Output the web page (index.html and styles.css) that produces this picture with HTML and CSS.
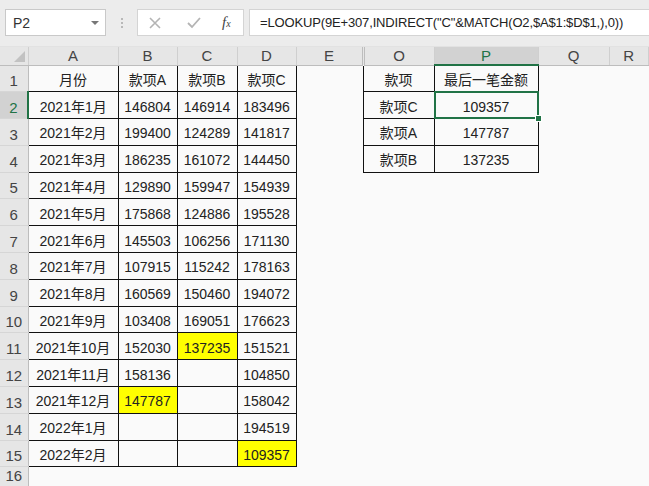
FILE: index.html
```html
<!DOCTYPE html>
<html lang="zh-CN">
<head>
    <meta charset="UTF-8">
    <title>最后一笔金额</title>
    <link rel="stylesheet" href="styles.css">
</head>
<body>

    <div class="toolbar">
        <div class="namebox">
            <span>P2</span>
            <span class="arrow"></span>
        </div>
        <div class="grip"><i></i><i></i><i></i></div>
        <div class="fx-buttons">
            <svg width="14" height="14" viewBox="0 0 14 14"><path d="M2 2 L12 12 M12 2 L2 12" stroke="#b4b4b4" stroke-width="1.6" fill="none"/></svg>
            <svg width="16" height="14" viewBox="0 0 16 14"><path d="M2 7 L6 11 L14 2" stroke="#b4b4b4" stroke-width="1.8" fill="none"/></svg>
            <span class="fx">f<sub>x</sub></span>
        </div>
        <div class="formula">=LOOKUP(9E+307,INDIRECT("C"&amp;MATCH(O2,$A$1:$D$1,),0))</div>
    </div>

    <table class="sheet">
        <colgroup>
            <col style="width:28px"><col style="width:90px"><col style="width:59px"><col style="width:60px">
            <col style="width:59px"><col style="width:67px"><col style="width:71px"><col style="width:104px">
            <col style="width:71px"><col>
        </colgroup>
        <tr class="colhead">
            <th class="corner"><span class="tri"></span></th>
            <th>A</th><th>B</th><th>C</th><th>D</th><th class="hidden-after">E</th>
            <th>O</th><th class="sel">P</th><th>Q</th><th>R</th>
        </tr>
        <tr><td class="rh">1</td><td class="c">月份</td><td class="c">款项A</td><td class="c">款项B</td><td class="c">款项C</td><td></td><td class="c">款项</td><td class="c">最后一笔金额</td><td></td><td></td></tr>
        <tr><td class="rh sel">2</td><td class="c">2021年1月</td><td class="c">146804</td><td class="c">146914</td><td class="c">183496</td><td></td><td class="c">款项C</td><td class="c active">109357</td><td></td><td></td></tr>
        <tr><td class="rh">3</td><td class="c">2021年2月</td><td class="c">199400</td><td class="c">124289</td><td class="c">141817</td><td></td><td class="c">款项A</td><td class="c">147787</td><td></td><td></td></tr>
        <tr><td class="rh">4</td><td class="c">2021年3月</td><td class="c">186235</td><td class="c">161072</td><td class="c">144450</td><td></td><td class="c">款项B</td><td class="c">137235</td><td></td><td></td></tr>
        <tr><td class="rh">5</td><td class="c">2021年4月</td><td class="c">129890</td><td class="c">159947</td><td class="c">154939</td><td></td><td></td><td></td><td></td><td></td></tr>
        <tr><td class="rh">6</td><td class="c">2021年5月</td><td class="c">175868</td><td class="c">124886</td><td class="c">195528</td><td></td><td></td><td></td><td></td><td></td></tr>
        <tr><td class="rh">7</td><td class="c">2021年6月</td><td class="c">145503</td><td class="c">106256</td><td class="c">171130</td><td></td><td></td><td></td><td></td><td></td></tr>
        <tr><td class="rh">8</td><td class="c">2021年7月</td><td class="c">107915</td><td class="c">115242</td><td class="c">178163</td><td></td><td></td><td></td><td></td><td></td></tr>
        <tr><td class="rh">9</td><td class="c">2021年8月</td><td class="c">160569</td><td class="c">150460</td><td class="c">194072</td><td></td><td></td><td></td><td></td><td></td></tr>
        <tr><td class="rh">10</td><td class="c">2021年9月</td><td class="c">103408</td><td class="c">169051</td><td class="c">176623</td><td></td><td></td><td></td><td></td><td></td></tr>
        <tr><td class="rh">11</td><td class="c">2021年10月</td><td class="c">152030</td><td class="c hl">137235</td><td class="c">151521</td><td></td><td></td><td></td><td></td><td></td></tr>
        <tr><td class="rh">12</td><td class="c">2021年11月</td><td class="c">158136</td><td class="c"></td><td class="c">104850</td><td></td><td></td><td></td><td></td><td></td></tr>
        <tr><td class="rh">13</td><td class="c">2021年12月</td><td class="c hl">147787</td><td class="c"></td><td class="c">158042</td><td></td><td></td><td></td><td></td><td></td></tr>
        <tr><td class="rh">14</td><td class="c">2022年1月</td><td class="c"></td><td class="c"></td><td class="c">194519</td><td></td><td></td><td></td><td></td><td></td></tr>
        <tr><td class="rh">15</td><td class="c">2022年2月</td><td class="c"></td><td class="c"></td><td class="c hl">109357</td><td></td><td></td><td></td><td></td><td></td></tr>
        <tr class="last"><td class="rh">16</td><td></td><td></td><td></td><td></td><td></td><td></td><td></td><td></td><td></td></tr>
    </table>

</body>
</html>
```

FILE: styles.css
```css
body {
    margin: 0;
    width: 649px;
    height: 486px;
    overflow: hidden;
    background-color: #fafafa;
    font-family: "Liberation Sans", "Noto Sans CJK SC", sans-serif;
    color: #222;
}
.toolbar {
    height: 47px;
    background-color: #ececec;
    display: flex;
    align-items: flex-start;
    padding-top: 9px;
    box-sizing: border-box;
    border-bottom: 1px solid #e2e2e2;
}
.namebox {
    margin-left: 5px;
    width: 101px;
    height: 27px;
    box-sizing: border-box;
    background-color: #fff;
    border: 1px solid #c9c9c9;
    display: flex;
    align-items: center;
    justify-content: space-between;
    padding: 0 6px 0 7px;
    font-size: 14px;
    color: #333;
}
.arrow {
    width: 0;
    height: 0;
    border-left: 4px solid transparent;
    border-right: 4px solid transparent;
    border-top: 4px solid #777;
}
.grip {
    width: 31px;
    height: 27px;
    display: flex;
    flex-direction: column;
    align-items: center;
    justify-content: center;
    gap: 2px;
}
.grip i {
    width: 2px;
    height: 2px;
    background-color: #b8b8b8;
}
.fx-buttons {
    width: 107px;
    height: 27px;
    box-sizing: border-box;
    background-color: #fff;
    border: 1px solid #d4d4d4;
    display: flex;
    align-items: center;
    padding-left: 10px;
}
.fx-buttons svg:first-child {
    margin-right: 24px;
}
.fx-buttons svg:nth-child(2) {
    margin-right: 20px;
}
.fx {
    font-family: "Liberation Serif", serif;
    font-style: italic;
    font-size: 15px;
    color: #444;
}
.fx sub {
    font-size: 10px;
    vertical-align: 0;
}
.formula {
    margin-left: 5px;
    flex: 1;
    height: 27px;
    box-sizing: border-box;
    background-color: #fff;
    border: 1px solid #d4d4d4;
    border-right: none;
    padding-left: 10px;
    font-size: 13px;
    letter-spacing: -0.15px;
    line-height: 25px;
    color: #222;
    white-space: nowrap;
    overflow: hidden;
}
.sheet {
    border-collapse: collapse;
    table-layout: fixed;
    width: 649px;
}
.colhead th {
    height: 17px;
    padding: 0;
    background-color: #e6e6e6;
    border-right: 1px solid #cfcfcf;
    border-bottom: 1px solid #bdbdbd;
    font-weight: normal;
    font-size: 15px;
    color: #444;
    line-height: 17px;
}
.colhead th.corner {
    position: relative;
}
.tri {
    position: absolute;
    right: 3px;
    bottom: 3px;
    width: 0;
    height: 0;
    border-left: 11px solid transparent;
    border-bottom: 11px solid #c2c2c2;
}
.colhead th.hidden-after {
    border-right: 3px double #bdbdbd;
}
.colhead th.sel {
    background-color: #d2d2d2;
    color: #217346;
    border-bottom: 2px solid #217346;
}
tr {
    height: 26.8px;
}
tr.colhead {
    height: 18px;
}
tr.last {
    height: 19px;
}
td {
    padding: 3px 0 0 0;
    text-align: center;
    vertical-align: middle;
    font-size: 14px;
    line-height: 18px;
    white-space: nowrap;
    overflow: hidden;
}
td.rh {
    background-color: #e6e6e6;
    border-right: 1px solid #bdbdbd;
    border-bottom: 1px solid #d6d6d6;
    vertical-align: bottom;
    font-size: 15px;
    color: #444;
    padding: 0 0 1px 0;
}
td.rh.sel {
    background-color: #d2d2d2;
    color: #217346;
    border-right: 2px solid #217346;
}
td.c {
    border: 1px solid #111;
}
td.hl {
    background-color: #ffff00;
}
td.active {
    position: relative;
    overflow: visible;
}
td.active::after {
    content: "";
    position: absolute;
    left: -1px;
    top: -1px;
    right: -1px;
    bottom: -1px;
    border: 2px solid #217346;
}
td.active::before {
    content: "";
    position: absolute;
    right: -4px;
    bottom: -4px;
    width: 5px;
    height: 5px;
    background-color: #217346;
    border: 1px solid #fff;
    z-index: 1;
}
```
